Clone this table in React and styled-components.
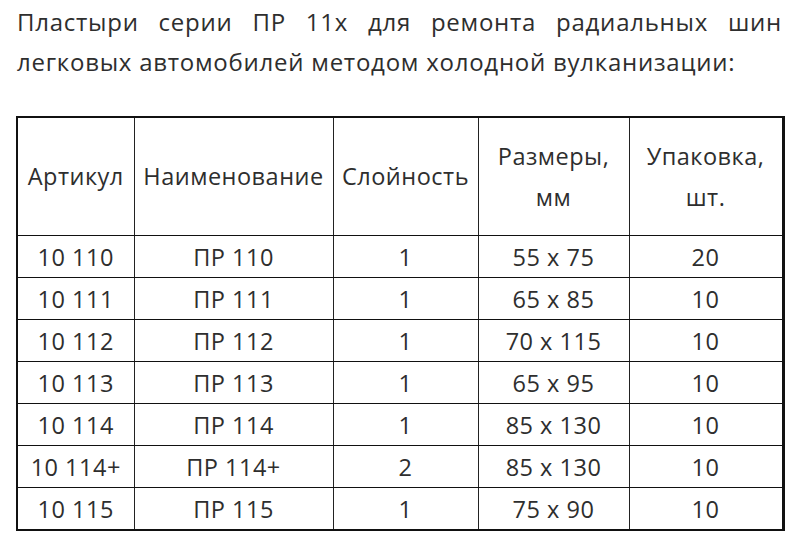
import React from 'react';
import styled, { createGlobalStyle } from 'styled-components';

const GlobalStyle = createGlobalStyle`
    html, body {
        margin: 0;
        padding: 0;
        background: #fff;
    }
    body {
        font-family: "Open Sans", "Noto Sans", sans-serif;
        color: #2e2e2e;
    }
`;

const Page = styled.div`
    width: 796px;
    height: 540px;
    padding: 2px 14px 0 17px;
    box-sizing: border-box;
    overflow: hidden;
`;

const Intro = styled.div`
    font-size: 24px;
    line-height: 40px;
    letter-spacing: 0.75px;
`;

const IntroLine = styled.div`
    text-align: ${props => props.$justify ? 'justify' : 'left'};
    text-align-last: ${props => props.$justify ? 'justify' : 'left'};
`;

const Table = styled.table`
    margin: 34px 0 0 -1px;
    width: 766px;
    border-collapse: collapse;
    table-layout: fixed;
    font-size: 23.5px;
    letter-spacing: 0.5px;
    color: #2e2e2e;
    border: 2px solid #111;
    border-right-width: 3px;
`;

const HeadCell = styled.th`
    font-weight: 400;
    height: 117px;
    padding: 0;
    line-height: 41px;
    text-align: center;
    vertical-align: middle;
    border: 1px solid #222;
    border-left-color: ${props => props.$grey ? '#8a8a8a' : '#222'};
    border-bottom-color: #111;
`;

const Cell = styled.td`
    height: 41px;
    padding: 0;
    line-height: 40px;
    text-align: center;
    border: 1px solid #222;
    border-left-color: ${props => props.$grey ? '#8a8a8a' : '#222'};
    border-top-color: #111;
    border-bottom-color: #111;
`;

const columns = [
    { width: 117, title: 'Артикул' },
    { width: 199, title: 'Наименование' },
    { width: 145, title: 'Слойность' },
    { width: 151, title: <>Размеры,<br />мм</> },
    { width: 154, title: <>Упаковка,<br />шт.</> },
];

const rows = [
    ['10 110', 'ПР 110', '1', '55 x 75', '20'],
    ['10 111', 'ПР 111', '1', '65 x 85', '10'],
    ['10 112', 'ПР 112', '1', '70 x 115', '10'],
    ['10 113', 'ПР 113', '1', '65 x 95', '10'],
    ['10 114', 'ПР 114', '1', '85 x 130', '10'],
    ['10 114+', 'ПР 114+', '2', '85 x 130', '10'],
    ['10 115', 'ПР 115', '1', '75 x 90', '10'],
];

// the divider left of the "Размеры" column is a lighter grey in the original
const isGrey = (i) => i === 3;

export default function App() {
    return (
        <Page>
            <GlobalStyle />
            <Intro>
                <IntroLine $justify>Пластыри серии ПР 11х для ремонта радиальных шин</IntroLine>
                <IntroLine>легковых автомобилей методом холодной вулканизации:</IntroLine>
            </Intro>
            <Table>
                <colgroup>
                    {columns.map((c, i) => <col key={i} style={{ width: c.width }} />)}
                </colgroup>
                <thead>
                    <tr>
                        {columns.map((c, i) => (
                            <HeadCell key={i} $grey={isGrey(i)}>{c.title}</HeadCell>
                        ))}
                    </tr>
                </thead>
                <tbody>
                    {rows.map((r, ri) => (
                        <tr key={ri}>
                            {r.map((v, ci) => <Cell key={ci} $grey={isGrey(ci)}>{v}</Cell>)}
                        </tr>
                    ))}
                </tbody>
            </Table>
        </Page>
    );
}
